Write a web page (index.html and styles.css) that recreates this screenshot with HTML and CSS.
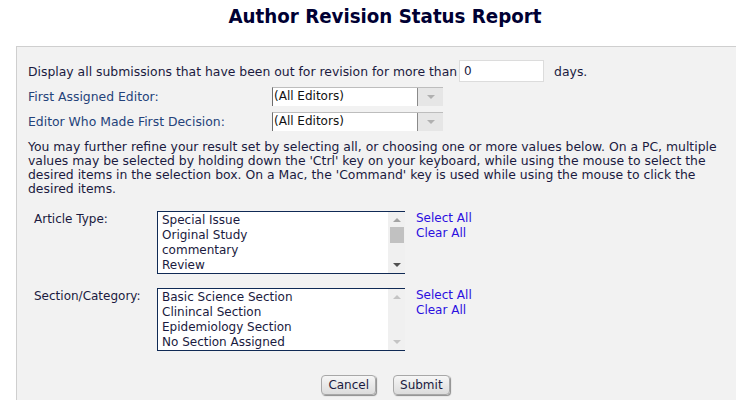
FILE: index.html
```html
<!DOCTYPE html>
<html>
<head>
    <meta http-equiv="Content-Type" content="text/html; charset=utf-8"/>
    <title>Author Revision Status Report</title>
    <link rel="stylesheet" href="styles.css">
</head>

<body>
<div class="page">
    <h1 class="title">Author Revision Status Report</h1>
    <form class="panel">
        <div class="row-days">
            <span>Display all submissions that have been out for revision for more than</span>
            <input class="days-input" type="text" value="0"/>
            <span class="days-unit">days.</span>
        </div>
        <div class="row-field">
            <label class="field-label">First Assigned Editor:</label>
            <div class="dropdown">
                <span class="dropdown-value">(All Editors)</span>
                <span class="dropdown-arrow"></span>
            </div>
        </div>
        <div class="row-field">
            <label class="field-label">Editor Who Made First Decision:</label>
            <div class="dropdown">
                <span class="dropdown-value">(All Editors)</span>
                <span class="dropdown-arrow"></span>
            </div>
        </div>
        <p class="help">You may further refine your result set by selecting all, or choosing one or more values below. On a PC, multiple values may be selected by holding down the 'Ctrl' key on your keyboard, while using the mouse to select the desired items in the selection box. On a Mac, the 'Command' key is used while using the mouse to click the desired items.</p>

        <div class="row-list">
            <label class="list-label">Article Type:</label>
            <div class="listbox">
                <ul>
                    <li>Special Issue</li>
                    <li>Original Study</li>
                    <li>commentary</li>
                    <li>Review</li>
                </ul>
                <div class="scrollbar">
                    <span class="arrow-up"></span>
                    <div class="track"><span class="thumb"></span></div>
                    <span class="arrow-down"></span>
                </div>
            </div>
            <div class="list-links">
                <a href="#">Select All</a>
                <a href="#">Clear All</a>
            </div>
        </div>

        <div class="row-list second">
            <label class="list-label">Section/Category:</label>
            <div class="listbox">
                <ul>
                    <li>Basic Science Section</li>
                    <li>Clinincal Section</li>
                    <li>Epidemiology Section</li>
                    <li>No Section Assigned</li>
                </ul>
                <div class="scrollbar disabled">
                    <span class="arrow-up"></span>
                    <div class="track"></div>
                    <span class="arrow-down"></span>
                </div>
            </div>
            <div class="list-links">
                <a href="#">Select All</a>
                <a href="#">Clear All</a>
            </div>
        </div>

        <div class="buttons">
            <button type="button" class="btn">Cancel</button>
            <button type="button" class="btn">Submit</button>
        </div>
    </form>
</div>
</body>
</html>
```

FILE: styles.css
```css
* {
    margin: 0;
    padding: 0;
    box-sizing: border-box;
}

html, body {
    overflow: hidden;
}

body {
    background: #fff;
    font-family: "DejaVu Sans", Verdana, sans-serif;
    font-size: 12.4px;
    color: #1c1c3c;
}

.page {
    width: 770px;
}

.title {
    font-family: "DejaVu Sans", Tahoma, sans-serif;
    font-stretch: condensed;
    font-size: 20.3px;
    font-weight: bold;
    color: #000033;
    text-align: center;
    height: 46px;
    padding-top: 4px;
}

.panel {
    margin: 0 16px;
    height: 354px;
    background: #f2f2f2;
    border-top: 1px solid #cfcfcf;
    border-left: 1px solid #cfcfcf;
    padding: 13px 0 0 11px;
}

.row-days {
    display: flex;
    align-items: center;
    height: 22px;
    color: #1a1a40;
}

.days-input {
    width: 85px;
    height: 22px;
    margin-left: 2px;
    border: 1px solid #dcdcdc;
    background: #fff;
    font-family: "DejaVu Sans", Verdana, sans-serif;
    font-size: 12px;
    color: #1a1a40;
    padding-left: 4px;
}

.days-unit {
    margin-left: 10px;
}

.row-field {
    display: flex;
    align-items: center;
    margin-top: 5px;
    height: 19px;
}

.row-field + .row-field {
    margin-top: 6px;
}

.field-label {
    width: 244px;
    color: #24427a;
}

.dropdown {
    display: flex;
    width: 171px;
    height: 19px;
    background: #fff;
    border-top: 1px solid #bdbdbd;
    border-left: 1px solid #6e6e6e;
}

.dropdown-value {
    flex: 1;
    line-height: 17px;
    padding-left: 1px;
    color: #111;
    font-size: 12px;
}

.dropdown-arrow {
    width: 26px;
    background: #e6e6e6;
    border-left: 1px solid #8a8a8a;
    position: relative;
}

.dropdown-arrow:after {
    content: "";
    position: absolute;
    left: 9px;
    top: 7px;
    border-left: 4px solid transparent;
    border-right: 4px solid transparent;
    border-top: 4px solid #b0b0b0;
}

.help {
    margin-top: 9px;
    width: 696px;
    line-height: 14px;
    color: #1a1a40;
}

.row-list {
    display: flex;
    align-items: flex-start;
    margin-top: 15px;
}

.row-list.second {
    margin-top: 14px;
}

.list-label {
    width: 129px;
    padding-left: 6px;
    padding-top: 1px;
    color: #1a1a40;
    font-size: 12px;
}

.listbox {
    display: flex;
    width: 248px;
    height: 63px;
    background: #fff;
    border: 1px solid #102a55;
    border-right: none;
}

.listbox ul {
    flex: 1;
    list-style: none;
    padding: 1px 0 0 4px;
    color: #1a1a40;
    font-size: 12px;
    line-height: 15px;
}

.scrollbar {
    width: 17px;
    background: #f0f0f0;
    display: flex;
    flex-direction: column;
    align-items: center;
}

.track {
    flex: 1;
    width: 100%;
    padding-top: 2px;
}

.thumb {
    display: block;
    width: 14px;
    height: 16px;
    margin: 0 auto;
    background: #c1c1c1;
}

.arrow-up, .arrow-down {
    display: block;
    width: 0;
    height: 0;
    margin: 6px 0 3px;
    border-left: 4px solid transparent;
    border-right: 4px solid transparent;
}

.arrow-up {
    border-bottom: 4px solid #a3a3a3;
}

.arrow-down {
    margin: 3px 0 6px;
    border-top: 4px solid #505050;
}

.disabled .arrow-up {
    border-bottom-color: #c4c4c4;
}

.disabled .arrow-down {
    border-top-color: #c4c4c4;
}

.list-links {
    display: flex;
    flex-direction: column;
    margin-left: 11px;
    line-height: 15px;
    font-size: 12px;
}

.list-links a {
    color: #2b0fe0;
    text-decoration: none;
}

.buttons {
    display: flex;
    justify-content: center;
    gap: 17px;
    margin-top: 24px;
    padding-right: 11px;
}

.btn {
    height: 20px;
    padding: 0 6px;
    font-family: "DejaVu Sans", Verdana, sans-serif;
    font-size: 12px;
    color: #1a1a40;
    background: linear-gradient(#f6f6f6, #dcdcdc);
    border: 1px solid #a8a8a8;
    border-radius: 4px;
    box-shadow: 1px 1px 1px #8c8c8c;
}
```
